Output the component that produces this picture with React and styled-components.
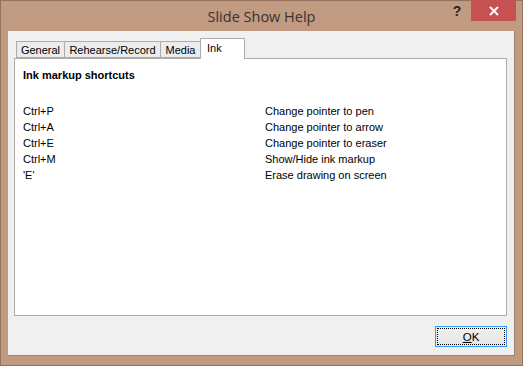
import { createGlobalStyle, styled } from "styled-components";

const GlobalStyle = createGlobalStyle`
  html, body {
    margin: 0;
    padding: 0;
    background: #ffffff;
  }
  * {
    box-sizing: border-box;
  }
`;

const shortcuts = [
  ["Ctrl+P", "Change pointer to pen"],
  ["Ctrl+A", "Change pointer to arrow"],
  ["Ctrl+E", "Change pointer to eraser"],
  ["Ctrl+M", "Show/Hide ink markup"],
  ["'E'", "Erase drawing on screen"],
];

const tabs = [
  { label: "General", width: 49 },
  { label: "Rehearse/Record", width: 97 },
  { label: "Media", width: 41 },
  { label: "Ink", width: 45 },
];

const App = () => {
  return (
    <>
      <GlobalStyle />
      <Window>
        <TitleBar>
          <Title>Slide Show Help</Title>
          <Controls>
            <HelpBtn>?</HelpBtn>
            <CloseBtn>
              <svg width="10" height="10" viewBox="0 0 10 10">
                <path d="M1 1 L9 9 M9 1 L1 9" stroke="#fff" strokeWidth="2" />
              </svg>
            </CloseBtn>
          </Controls>
        </TitleBar>
        <Client>
          <TabList>
            {tabs.map((t) => (
              <Tab key={t.label} $active={t.label === "Ink"} $w={t.width}>
                {t.label}
              </Tab>
            ))}
          </TabList>
          <Panel>
            <Heading>Ink markup shortcuts</Heading>
            <Grid>
              {shortcuts.map(([key, desc]) => (
                <Row key={key}>
                  <Cell>{key}</Cell>
                  <Cell>{desc}</Cell>
                </Row>
              ))}
            </Grid>
          </Panel>
          <Footer>
            <OkBtn>
              <Focus>
                <u>O</u>K
              </Focus>
            </OkBtn>
          </Footer>
        </Client>
      </Window>
    </>
  );
};

export default App;

const Window = styled.div`
  width: 523px;
  height: 366px;
  background: #c09a81;
  border: 1px solid #94725d;
  display: flex;
  flex-direction: column;
`;

const TitleBar = styled.div`
  height: 30px;
  position: relative;
  display: flex;
  align-items: center;
  justify-content: center;
`;

const Title = styled.div`
  font-family: "Open Sans", "Liberation Sans", sans-serif;
  font-size: 14.5px;
  color: #3a3330;
  margin-top: 1px;
`;

const Controls = styled.div`
  position: absolute;
  right: 6px;
  top: -1px;
  display: flex;
  align-items: flex-start;
`;

const HelpBtn = styled.div`
  font-family: "Liberation Sans", Arial, sans-serif;
  font-weight: bold;
  font-size: 14px;
  color: #2a2522;
  width: 26px;
  height: 20px;
  display: flex;
  align-items: center;
  justify-content: center;
  margin-right: 1px;
  margin-top: 1px;
`;

const CloseBtn = styled.div`
  width: 45px;
  height: 21px;
  background: #c75050;
  display: flex;
  align-items: center;
  justify-content: center;
`;

const Client = styled.div`
  flex: 1;
  margin: 0 7px 9px 7px;
  background: #f0f0f0;
  border-right: 1px solid #a6836c;
  border-bottom: 1px solid #a6836c;
  padding: 7px 7px 0 6px;
  display: flex;
  flex-direction: column;
`;

const TabList = styled.div`
  display: flex;
  align-items: flex-end;
  height: 20px;
  padding-left: 3px;
  position: relative;
  z-index: 1;
`;

const Tab = styled.div`
  font-family: "Liberation Sans", Arial, sans-serif;
  font-size: 11px;
  color: #000;
  width: ${(p) => p.$w}px;
  height: ${(p) => (p.$active ? "21px" : "17px")};
  padding: ${(p) => (p.$active ? "3px 0 0 6px" : "2px 0 0 0")};
  text-align: ${(p) => (p.$active ? "left" : "center")};
  background: ${(p) => (p.$active ? "#ffffff" : "#ececec")};
  border: 1px solid #acacac;
  border-bottom: ${(p) => (p.$active ? "none" : "1px solid #acacac")};
  margin-left: -1px;
  margin-bottom: ${(p) => (p.$active ? "-1px" : "0")};
  white-space: nowrap;
`;

const Panel = styled.div`
  height: 258px;
  background: #ffffff;
  border: 1px solid #acacac;
  padding: 8px 8px;
  font-family: "Liberation Sans", Arial, sans-serif;
  font-size: 11px;
  color: #000;
`;

const Heading = styled.div`
  font-weight: bold;
  line-height: 16px;
  margin-bottom: 20px;
`;

const Grid = styled.div`
  display: flex;
  flex-direction: column;
`;

const Row = styled.div`
  display: grid;
  grid-template-columns: 242px 1fr;
  line-height: 16px;
`;

const Cell = styled.div`
  white-space: nowrap;
`;

const Footer = styled.div`
  display: flex;
  justify-content: flex-end;
  padding-top: 10px;
`;

const OkBtn = styled.div`
  width: 72px;
  height: 21px;
  border: 1px solid #3399ff;
  background: linear-gradient(#f0f0f0, #e5e5e5);
  padding: 1px;
`;

const Focus = styled.div`
  width: 100%;
  height: 100%;
  border: 1px dotted #000;
  display: flex;
  align-items: center;
  justify-content: center;
  font-family: "Liberation Sans", Arial, sans-serif;
  font-size: 11.5px;
  color: #000;
`;
